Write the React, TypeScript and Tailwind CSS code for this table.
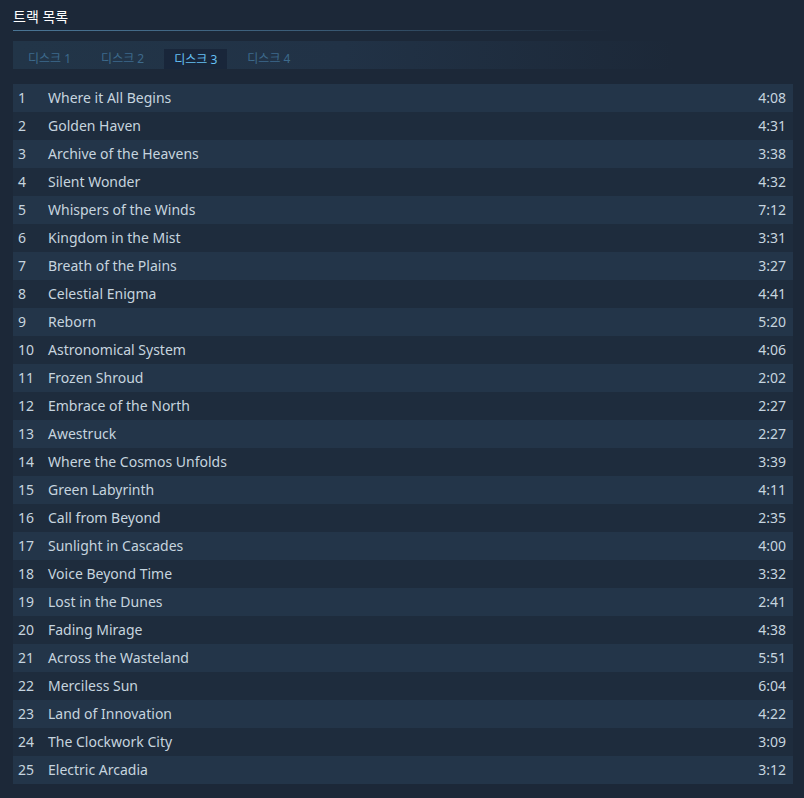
const tracks: [string, string][] = [
  ['Where it All Begins', '4:08'],
  ['Golden Haven', '4:31'],
  ['Archive of the Heavens', '3:38'],
  ['Silent Wonder', '4:32'],
  ['Whispers of the Winds', '7:12'],
  ['Kingdom in the Mist', '3:31'],
  ['Breath of the Plains', '3:27'],
  ['Celestial Enigma', '4:41'],
  ['Reborn', '5:20'],
  ['Astronomical System', '4:06'],
  ['Frozen Shroud', '2:02'],
  ['Embrace of the North', '2:27'],
  ['Awestruck', '2:27'],
  ['Where the Cosmos Unfolds', '3:39'],
  ['Green Labyrinth', '4:11'],
  ['Call from Beyond', '2:35'],
  ['Sunlight in Cascades', '4:00'],
  ['Voice Beyond Time', '3:32'],
  ['Lost in the Dunes', '2:41'],
  ['Fading Mirage', '4:38'],
  ['Across the Wasteland', '5:51'],
  ['Merciless Sun', '6:04'],
  ['Land of Innovation', '4:22'],
  ['The Clockwork City', '3:09'],
  ['Electric Arcadia', '3:12'],
];

const discs = ['디스크 1', '디스크 2', '디스크 3', '디스크 4'];

export default function App() {
  const active = 2;
  return (
    <div
      className="min-h-[798px] w-full bg-[#1c2838] px-[13px] pt-[6px] pb-4"
      style={{ fontFamily: '"Noto Sans", "Noto Sans CJK KR", sans-serif' }}
    >
      {/* Heading */}
      <h2 className="text-[14px] leading-[22px] text-white pb-[2px]">트랙 목록</h2>
      <div className="h-px w-[600px] bg-gradient-to-r from-[#4a7595] via-[#3a5b76] to-transparent" />

      {/* Disc tabs */}
      <div className="mt-[10px] h-[28px] w-[660px] bg-gradient-to-r from-[#223548] via-[#213246] to-transparent flex items-end pl-[5px]">
        {discs.map((d, i) => (
          <button
            key={d}
            className={`h-[20px] px-[10px] mr-[10px] text-[12px] leading-[20px] ${
              i === active ? 'bg-[#19263a] text-[#66c0f4] pt-[1px]' : 'text-[#3d6a8c]'
            }`}
          >
            {d}
          </button>
        ))}
      </div>

      {/* Track rows */}
      <div className="mt-[15px] w-[780px]">
        {tracks.map(([title, time], i) => (
          <div
            key={title}
            className={`h-[28px] flex items-center pb-[2px] text-[14px] text-[#c6d4df] ${
              i % 2 === 0 ? 'bg-[#233549]' : 'bg-[#1e2c3d]'
            }`}
          >
            <span className="w-[35px] pl-[5px]">{i + 1}</span>
            <span className="flex-1">{title}</span>
            <span className="pr-[7px]">{time}</span>
          </div>
        ))}
      </div>
    </div>
  );
}
